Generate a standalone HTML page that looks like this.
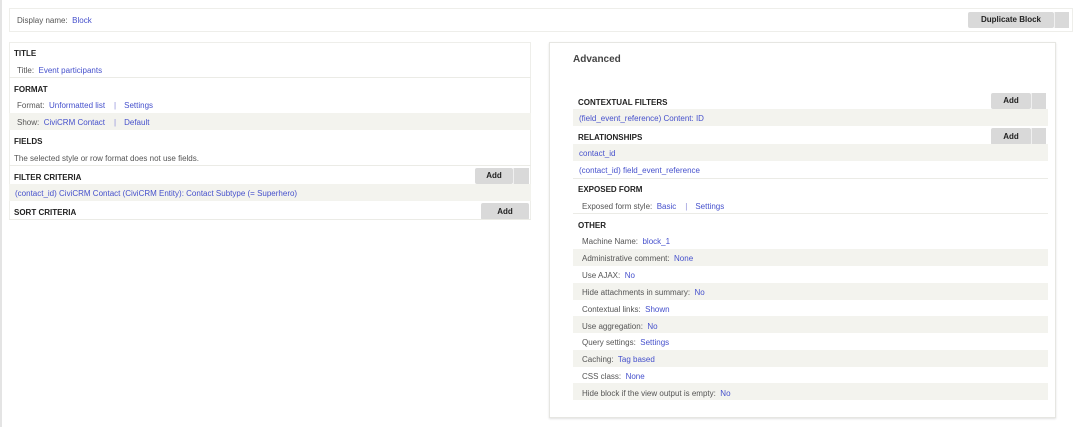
<!DOCTYPE html>
<html><head><style>
*{margin:0;padding:0;box-sizing:border-box}
body{width:1080px;height:427px;background:#fff;font-family:"Liberation Sans",sans-serif;font-size:8px;color:#555;position:relative;overflow:hidden}
.abs{position:absolute}
a{color:#4550cc;text-decoration:none}
.h{position:absolute;font-weight:bold;color:#222;font-size:8px;text-transform:uppercase;margin-top:1px}
.t{position:absolute;white-space:nowrap;margin-top:1px}
.bg{position:absolute;background:#f3f3ee}
.sep{position:absolute;height:1px;background:#ebebe6}
.btn{position:absolute;background:#d9d9d9;border-radius:2px;font-weight:bold;color:#222;font-size:8px;text-align:center}
.split{position:absolute;background:#d9d9d9;border-left:1px solid #f0f0f0}
.pipe{color:#8a8ad8;margin:0 8px 0 9px}
</style></head><body>
<div class="abs" style="left:0;top:0;width:2px;height:427px;background:#e4e4e4"></div>
<div class="abs" style="left:9px;top:8px;width:1064px;height:24px;border:1px solid #eeeeea"></div>
<div class="t" style="left:17px;top:15px">Display name:&nbsp; <a>Block</a></div>
<div class="btn" style="left:968px;top:12px;width:86px;height:16px;line-height:16px">Duplicate Block</div>
<div class="split" style="left:1054px;top:12px;width:15px;height:16px"></div>

<div class="abs" style="left:9px;top:42px;width:522px;height:178px;border:1px solid #eeeeea;border-bottom:none"></div>
<div class="h" style="left:14px;top:48px">Title</div>
<div class="t" style="left:17px;top:65px">Title:&nbsp; <a>Event participants</a></div>
<div class="sep" style="left:9px;top:77px;width:522px"></div>
<div class="h" style="left:14px;top:84px">Format</div>
<div class="t" style="left:17px;top:100px">Format:&nbsp; <a>Unformatted list</a><span class="pipe">|</span><a>Settings</a></div>
<div class="bg" style="left:9px;top:113px;width:522px;height:17px"></div>
<div class="t" style="left:17px;top:117px">Show:&nbsp; <a>CiviCRM Contact</a><span class="pipe">|</span><a>Default</a></div>
<div class="h" style="left:14px;top:136px">Fields</div>
<div class="t" style="left:14px;top:153px">The selected style or row format does not use fields.</div>
<div class="sep" style="left:9px;top:165px;width:522px"></div>
<div class="h" style="left:14px;top:172px">Filter criteria</div>
<div class="btn" style="left:475px;top:168px;width:38px;height:16px;line-height:16px">Add</div>
<div class="split" style="left:513px;top:168px;width:16px;height:16px"></div>
<div class="bg" style="left:9px;top:184px;width:522px;height:17px"></div>
<div class="t" style="left:15px;top:188px"><a>(contact_id) CiviCRM Contact (CiviCRM Entity): Contact Subtype (= Superhero)</a></div>
<div class="h" style="left:14px;top:207px">Sort criteria</div>
<div class="btn" style="left:481px;top:203px;width:48px;height:17px;line-height:17px">Add</div>
<div class="sep" style="left:9px;top:219px;width:522px"></div>

<div class="abs" style="left:549px;top:42px;width:507px;height:376px;border:1px solid #e6e6e2;box-shadow:0 1px 2px rgba(0,0,0,.12)"></div>
<div class="t" style="left:573px;top:53px;font-size:10px;font-weight:bold;color:#444">Advanced</div>
<div class="h" style="left:578px;top:97px">Contextual filters</div>
<div class="btn" style="left:991px;top:93px;width:40px;height:16px;line-height:16px">Add</div>
<div class="split" style="left:1031px;top:93px;width:15px;height:16px"></div>
<div class="bg" style="left:573px;top:109px;width:475px;height:17px"></div>
<div class="t" style="left:579px;top:113px"><a>(field_event_reference) Content: ID</a></div>
<div class="h" style="left:578px;top:132px">Relationships</div>
<div class="btn" style="left:991px;top:128px;width:40px;height:17px;line-height:17px">Add</div>
<div class="split" style="left:1031px;top:128px;width:15px;height:17px"></div>
<div class="bg" style="left:573px;top:144px;width:475px;height:17px"></div>
<div class="t" style="left:579px;top:148px"><a>contact_id</a></div>
<div class="t" style="left:579px;top:165px"><a>(contact_id) field_event_reference</a></div>
<div class="sep" style="left:573px;top:178px;width:475px"></div>
<div class="h" style="left:578px;top:184px">Exposed form</div>
<div class="t" style="left:582px;top:201px">Exposed form style:&nbsp; <a>Basic</a><span class="pipe">|</span><a>Settings</a></div>
<div class="sep" style="left:573px;top:213px;width:475px"></div>
<div class="h" style="left:578px;top:220px">Other</div>
<div class="t" style="left:582px;top:236px">Machine Name:&nbsp; <a>block_1</a></div>
<div class="bg" style="left:573px;top:249px;width:475px;height:17px"></div>
<div class="t" style="left:582px;top:253px">Administrative comment:&nbsp; <a>None</a></div>
<div class="t" style="left:582px;top:270px">Use AJAX:&nbsp; <a>No</a></div>
<div class="bg" style="left:573px;top:283px;width:475px;height:17px"></div>
<div class="t" style="left:582px;top:287px">Hide attachments in summary:&nbsp; <a>No</a></div>
<div class="t" style="left:582px;top:304px">Contextual links:&nbsp; <a>Shown</a></div>
<div class="bg" style="left:573px;top:316px;width:475px;height:17px"></div>
<div class="t" style="left:582px;top:321px">Use aggregation:&nbsp; <a>No</a></div>
<div class="t" style="left:582px;top:337px">Query settings:&nbsp; <a>Settings</a></div>
<div class="bg" style="left:573px;top:350px;width:475px;height:17px"></div>
<div class="t" style="left:582px;top:354px">Caching:&nbsp; <a>Tag based</a></div>
<div class="t" style="left:582px;top:371px">CSS class:&nbsp; <a>None</a></div>
<div class="bg" style="left:573px;top:383px;width:475px;height:17px"></div>
<div class="t" style="left:582px;top:388px">Hide block if the view output is empty:&nbsp; <a>No</a></div>
</body></html>
